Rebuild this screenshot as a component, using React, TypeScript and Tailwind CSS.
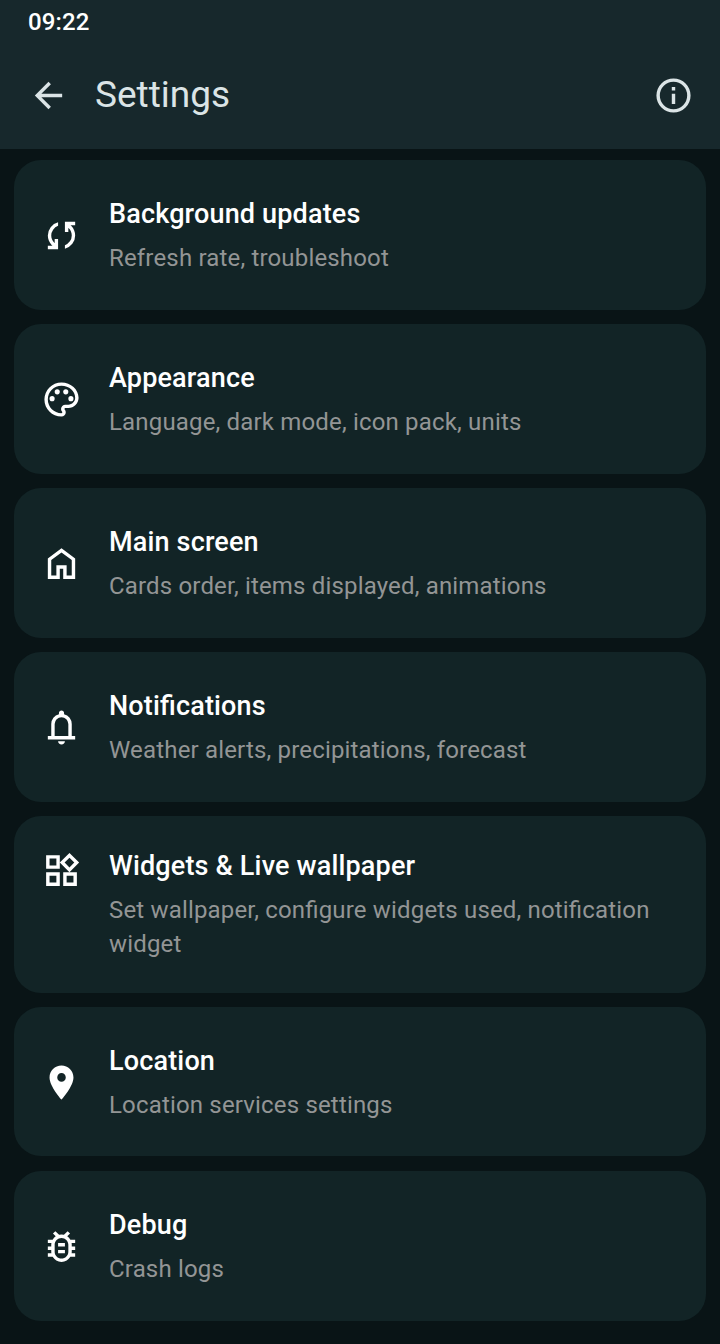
import React from "react";

type Item = { title: string; desc: string; box: string; icon: React.ReactNode };

const items: Item[] = [
  {
    title: "Background updates", desc: "Refresh rate, troubleshoot", box: "h-[150px] items-center",
    icon: <path d="M4 20v-2h2.75l-.4-.35q-1.225-1.225-1.787-2.662T4 12.05q0-2.775 1.663-4.937T10 4.25v2.1Q8.2 7 7.1 8.563T6 12.05q0 1.125.425 2.188T7.75 16.2l.25.25V14h2v6zm10-.25v-2.1q1.8-.65 2.9-2.212T18 11.95q0-1.125-.425-2.187T16.25 7.8L16 7.55V10h-2V4h6v2h-2.75l.4.35q1.225 1.225 1.788 2.663T20 11.95q0 2.775-1.662 4.938T14 19.75" />,
  },
  {
    title: "Appearance", desc: "Language, dark mode, icon pack, units", box: "h-[150px] items-center",
    icon: (
      <>
        <path d="M12 22C6.49 22 2 17.51 2 12S6.49 2 12 2s10 4.04 10 9c0 3.31-2.69 6-6 6h-1.77c-.28 0-.5.22-.5.5 0 .12.05.23.13.33.41.47.64 1.06.64 1.67A2.5 2.5 0 0 1 12 22zm0-18c-4.41 0-8 3.59-8 8s3.59 8 8 8c.28 0 .5-.22.5-.5a.54.54 0 0 0-.14-.35c-.41-.46-.63-1.05-.63-1.65a2.5 2.5 0 0 1 2.5-2.5H16c2.21 0 4-1.79 4-4 0-3.86-3.59-7-8-7z" />
        <circle cx="6.5" cy="11.5" r="1.5" /><circle cx="9.5" cy="7.5" r="1.5" /><circle cx="14.5" cy="7.5" r="1.5" /><circle cx="17.5" cy="11.5" r="1.5" />
      </>
    ),
  },
  {
    title: "Main screen", desc: "Cards order, items displayed, animations", box: "h-[150px] items-center",
    icon: <path d="M6 19h3v-6h6v6h3v-9l-6-4.5L6 10zm-2 2V9l8-6 8 6v12h-7v-6h-2v6z" />,
  },
  {
    title: "Notifications", desc: "Weather alerts, precipitations, forecast", box: "h-[150px] items-center",
    icon: <path d="M4 19v-2h2v-7q0-2.075 1.25-3.687T10.5 4.2v-.7q0-.625.438-1.062T12 2t1.063.438T13.5 3.5v.7q2 .5 3.25 2.113T18 10v7h2v2zm8 3q-.825 0-1.412-.587T10 20h4q0 .825-.587 1.413T12 22m-4-5h8v-7q0-1.65-1.175-2.825T12 6 9.175 7.175 8 10z" />,
  },
  {
    title: "Widgets & Live wallpaper", desc: "Set wallpaper, configure widgets used, notification widget", box: "h-[177px] items-start pt-8 [&>svg]:mt-0.5",
    icon: <path d="M16.66 4.52l2.83 2.83-2.83 2.83-2.83-2.83 2.83-2.83M9 5v4H5V5h4m10 10v4h-4v-4h4M9 15v4H5v-4h4m7.66-13.31L11 7.34 16.66 13l5.66-5.66-5.66-5.65zM11 3H3v8h8V3zm10 10h-8v8h8v-8zm-10 0H3v8h8v-8z" />,
  },
  {
    title: "Location", desc: "Location services settings", box: "h-[149px] items-center pt-px",
    icon: <path d="M12 2C8.13 2 5 5.13 5 9c0 5.25 7 13 7 13s7-7.75 7-13c0-3.87-3.13-7-7-7zm0 9.5a2.5 2.5 0 0 1 0-5 2.5 2.5 0 0 1 0 5z" />,
  },
  {
    title: "Debug", desc: "Crash logs", box: "mt-px h-[150px] items-center",
    icon: <path d="M20 8h-2.81a5.985 5.985 0 0 0-1.82-1.96L17 4.41 15.59 3l-2.17 2.17a6.002 6.002 0 0 0-2.83 0L8.41 3 7 4.41l1.62 1.63C7.88 6.55 7.26 7.22 6.81 8H4v2h2.09c-.05.33-.09.66-.09 1v1H4v2h2v1c0 .34.04.67.09 1H4v2h2.81c1.04 1.79 2.97 3 5.19 3s4.15-1.21 5.19-3H20v-2h-2.09c.05-.33.09-.66.09-1v-1h2v-2h-2v-1c0-.34-.04-.67-.09-1H20V8zm-4 7c0 2.21-1.79 4-4 4s-4-1.79-4-4v-4c0-2.21 1.79-4 4-4s4 1.79 4 4v4zm-6-1h4v2h-4v-2zm0-4h4v2h-4v-2z" />,
  },
];

function Icon({ size = 41, children }: { size?: number; children: React.ReactNode }) {
  return <svg width={size} height={size} viewBox="0 0 24 24" fill="currentColor" className="shrink-0">{children}</svg>;
}

export default function App() {
  return (
    <div className="h-[1344px] w-[720px] overflow-hidden bg-[#091416] font-['Roboto',sans-serif] text-white">
      <header className="h-[149px] bg-[#17282c]">
        <div className="h-[42px] pl-7 pt-[6px] text-[24px] leading-8 font-medium tracking-[0.15px]">09:22</div>
        <div className="flex h-[107px] items-center pl-7 pr-[26px] text-[#dbe4e6]">
          <Icon><path d="M7.825 13l5.6 5.6L12 20l-8-8 8-8 1.425 1.4-5.6 5.6H20v2z" /></Icon>
          <h1 className="mb-0.5 ml-[26px] flex-1 text-[37px] leading-[48px]">Settings</h1>
          <Icon><path d="M11 7h2v2h-2zm0 4h2v6h-2zm1-9a10 10 0 1 0 0 20 10 10 0 0 0 0-20zm0 18a8 8 0 1 1 0-16 8 8 0 0 1 0 16z" /></Icon>
        </div>
      </header>
      <main className="flex flex-col gap-[14px] px-[14px] pt-[11px] [font-feature-settings:'liga'_1]">
        {items.map((it) => (
          <section key={it.title} className={`flex shrink-0 rounded-[27px] bg-[#122426] pl-[27px] pr-7 ${it.box}`}>
            <Icon>{it.icon}</Icon>
            <div className="ml-[27px] flex-1">
              <h2 className="text-[27px] leading-9 font-medium tracking-[0.16px]">{it.title}</h2>
              <p className="mt-[9px] text-[24px] leading-[34px] tracking-[0.17px] text-[#939595]">{it.desc}</p>
            </div>
          </section>
        ))}
      </main>
    </div>
  );
}
